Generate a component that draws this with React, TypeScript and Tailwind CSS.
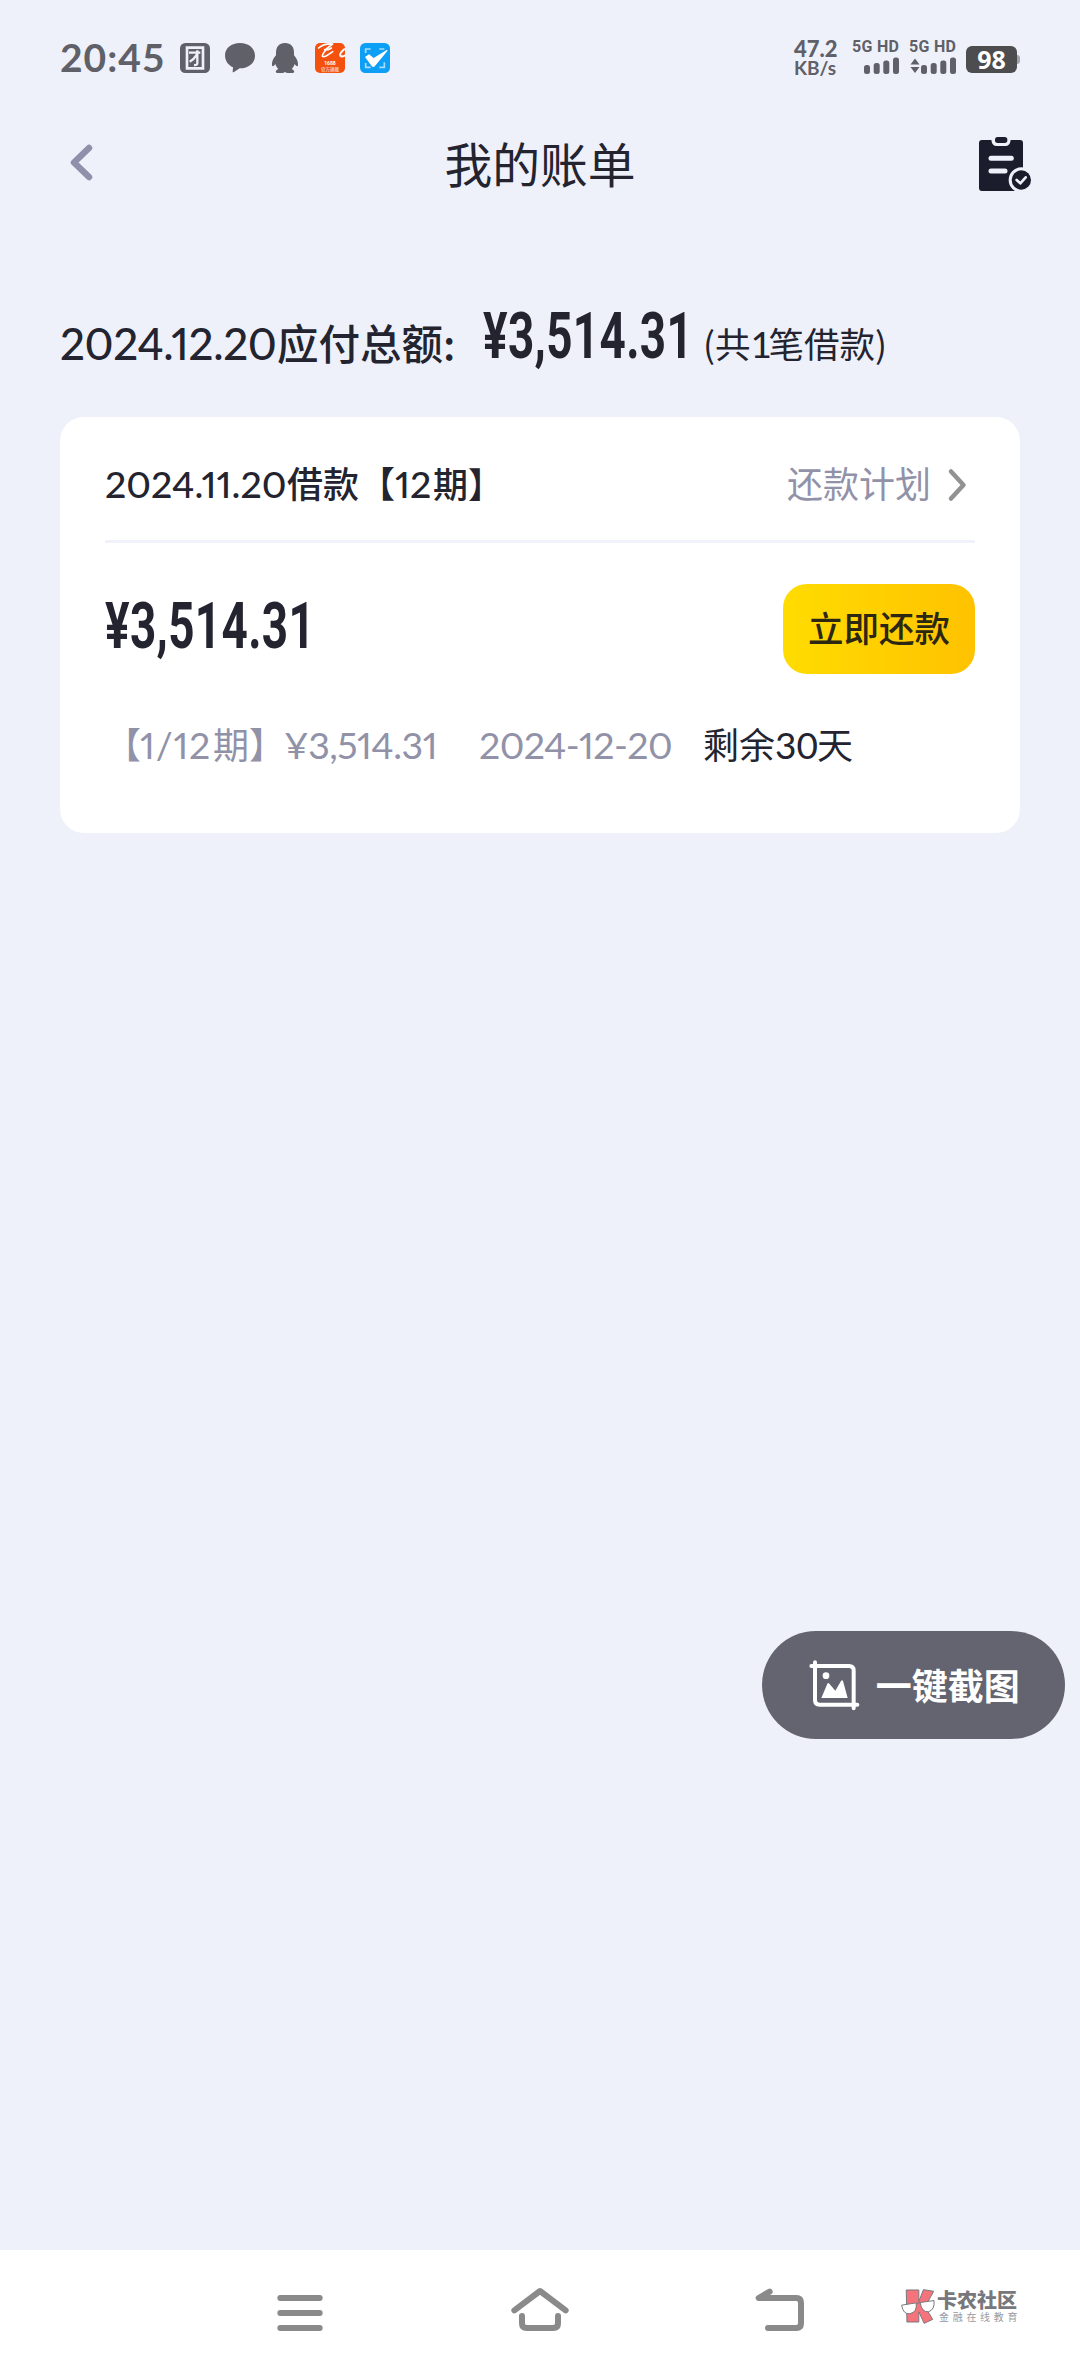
interface AmountProps {
  value: string;
}

// condensed amount figure
const Amount = ({ value }: AmountProps) => {
  return (
    <div className="h-[64px] w-[206px] whitespace-nowrap">
      <span className="inline-block origin-left scale-x-[0.705] font-['Roboto',sans-serif] text-[65px] font-bold leading-[64px] tracking-[0.5px] text-[#23242f]">
        {value}
      </span>
    </div>
  );
};

const Signal = ({ arrows = false }: { arrows?: boolean }) => {
  return (
    <div className="w-[47px]">
      <p className="h-[14px] whitespace-nowrap font-['Roboto',sans-serif] text-[16px] font-bold leading-[14px] tracking-[0.3px]">
        5G HD
      </p>
      <svg viewBox="0 0 47 18" className="mt-[3px] h-[18px] w-[47px]" fill="currentColor">
        {arrows && <path d="M6 1.5l4.5 6h-9zM6 16l-4.5-6h9z" />}
        <rect x="12" y="8" width="6" height="9" rx="2.5" />
        <rect x="21.7" y="6" width="6" height="11" rx="2.5" />
        <rect x="31.3" y="3.5" width="6" height="13.5" rx="2.5" />
        <rect x="41" y="0.5" width="6" height="16.5" rx="2.5" />
      </svg>
    </div>
  );
};

const StatusBar = () => {
  return (
    <div className="flex h-[110px] items-start px-[60px] text-[#5f6068]">
      <span className="mt-[33px] w-[120px] whitespace-nowrap font-['Lato',sans-serif] text-[39px] font-bold leading-[48px] tracking-[1px]">
        20:45
      </span>
      <div className="mt-[43px] flex gap-[15px]">
        <svg viewBox="0 0 90 90" className="size-[30px]">
          <rect width="90" height="90" rx="16" fill="#5f6068" />
          <path d="M17 10h56v70H17zM25 18v54h40V18z" fill="#eef1fa" fillRule="evenodd" />
          <path d="M27 29h34M52 22v39q0 6-10 5M51 34Q42 49 29 56" fill="none" stroke="#eef1fa" strokeWidth="7" />
        </svg>
        <svg viewBox="0 0 90 90" className="size-[30px]" fill="#5f6068">
          <path d="M45 0C19 0 0 16 0 37c0 17 10 30 24 36l-1 13c0 2 2 2 4 1l17-11c27 0 46-16 46-38S71 0 45 0z" />
        </svg>
        <svg viewBox="0 0 90 90" className="size-[30px]" fill="#5f6068">
          <path d="M45 0C27 0 18 12 18 29v8C9 47 5 57 6 67c1 5 5 3 10-4 2 7 5 11 9 15-9 4-10 11-3 12h17l6-3 6 3h17c7-1 6-8-3-12 4-4 7-8 9-15 5 7 9 9 10 4 1-10-3-20-12-30v-8C72 12 63 0 45 0z" />
        </svg>
        <div className="relative size-[30px] overflow-hidden rounded-[5px] bg-[#f4510f]">
          <svg viewBox="0 0 90 90" className="size-[30px]" fill="none" stroke="#fff" strokeLinecap="round">
            <path d="M11 15Q26 1 53 3M52 4Q35 14 25 31Q17 46 33 39Q44 33 53 26M29 20Q40 22 49 15" strokeWidth="5" />
            <path d="M88 19Q73 31 76 38Q80 43 89 38" strokeWidth="6" />
          </svg>
          <span className="absolute left-0 top-[17px] w-[30px] text-center font-['Roboto',sans-serif] text-[5px] font-bold leading-[6px] text-white">
            1688
          </span>
          <span className="absolute left-0 top-[24px] w-[30px] whitespace-nowrap text-center font-['Noto_Sans_CJK_SC',sans-serif] text-[4.500px] leading-[5px] text-white">
            官方旗舰
          </span>
        </div>
        <svg viewBox="0 0 90 90" className="size-[30px]" fill="none">
          <rect width="90" height="90" rx="16" fill="#0d9ff5" />
          <path d="M17 30V18h15M58 18h15M17 60v13h15M58 73h15V58" stroke="#a5dcfc" strokeWidth="5" />
          <path d="M15 42l12-8 14 11 39-24q4-1 2 3L45 69q-5 6-10 0z" fill="#fff" />
        </svg>
      </div>
      <div className="ml-auto mt-[40px] flex items-start">
        <div className="w-[58px] whitespace-nowrap font-['Lato',sans-serif]">
          <p className="text-[22px] font-black leading-[17px]">47.2</p>
          <p className="mt-[2px] text-[19px] font-bold leading-[17px]">KB/s</p>
        </div>
        <Signal />
        <div className="w-[10px]" />
        <Signal arrows />
        <div className="ml-[10px] mt-[6px] flex items-center">
          <span className="flex h-[27px] w-[51px] items-center justify-center rounded-[6px] bg-[#4d4d50] font-['Open_Sans',sans-serif] text-[25px] font-bold leading-[27px] text-white">
            98
          </span>
          <span className="h-[9px] w-[3px] rounded-r-sm bg-[#a3a4ab]" />
        </div>
      </div>
    </div>
  );
};

const Header = () => {
  return (
    <div className="flex h-[110px] items-start justify-between pr-[20px]">
      <svg viewBox="0 0 140 110" className="h-[110px] w-[140px]" fill="none">
        <path d="M89 38L74 52.5L89 67" stroke="#9090ab" strokeWidth="6.5" strokeLinecap="round" strokeLinejoin="round" />
      </svg>
      <h1 className="mt-[23px] text-[47.800px] leading-[60px] text-[#23242f]">我的账单</h1>
      <svg viewBox="0 -30 360 330" className="h-[110px] w-[120px]">
        <path d="M126 60h28q2 18 16 18h26q14 0 16-18h28q9 0 9 9v144H126q-9 0-9-9V69q0-9 9-9z" fill="#1b1c2c" />
        <rect x="165" y="51" width="37" height="18" rx="8" fill="#1b1c2c" />
        <path d="M153 115h61M153 153h42" stroke="#eef1fa" strokeWidth="15" strokeLinecap="round" />
        <circle cx="244" cy="180" r="38" fill="#eef1fa" />
        <circle cx="244" cy="180" r="29" fill="#1b1c2c" />
        <path d="M230 180l11 10 16-18" fill="none" stroke="#eef1fa" strokeWidth="8" strokeLinecap="round" strokeLinejoin="round" />
      </svg>
    </div>
  );
};

const BillCard = () => {
  return (
    <div className="mx-[60px] h-[416px] rounded-[24px] bg-white px-[45px]">
      <div className="flex h-[126px] items-start justify-between border-b-[3px] border-[#f0f1f9]">
        <div className="mt-[40px] flex items-baseline whitespace-nowrap leading-[50px] text-[#23242f]">
          <span className="w-[182px] font-['Lato',sans-serif] text-[37.500px] font-medium proportional-nums">2024.11.20</span>
          <span className="w-[108px] text-[36px] font-medium">借款【</span>
          <span className="w-[38px] font-['Lato',sans-serif] text-[37.500px] font-medium proportional-nums">12</span>
          <span className="text-[35px] font-medium">期】</span>
        </div>
        <div className="mt-[40px] flex items-center text-[36px] leading-[50px] text-[#9192a8]">
          <span>还款计划</span>
          <svg viewBox="0 0 44 50" className="h-[50px] w-[44px]" fill="none">
            <path d="M20 14.5L32.5 28L20 41.5" stroke="#929292" strokeWidth="4.5" strokeLinecap="round" strokeLinejoin="round" />
          </svg>
        </div>
      </div>
      <div className="flex items-start justify-between pt-[41px]">
        <div className="mt-[10px]">
          <Amount value="¥3,514.31" />
        </div>
        <button className="h-[90px] w-[192px] rounded-[24px] bg-linear-to-r from-[#ffdc00] to-[#ffc200] pb-[4px] text-[35.500px] font-medium leading-[86px] text-[#2b2713]">
          立即还款
        </button>
      </div>
      <div className="mt-[44px] flex items-baseline whitespace-nowrap text-[36px] leading-[50px] text-[#9192a8]">
        <span className="w-[35px]">【</span>
        <span className="w-[73px] font-['Lato',sans-serif] text-[37.500px] proportional-nums tracking-[0.800px]">1/12</span>
        <span className="w-[71px]">期】</span>
        <span className="w-[195px] font-['Lato',sans-serif] text-[37.500px] proportional-nums tracking-[-0.500px]">¥3,514.31</span>
        <span className="w-[224px] font-['Lato',sans-serif] text-[37.500px] proportional-nums tracking-[-0.600px]">2024-12-20</span>
        <span className="flex items-baseline text-[#23242f]">
          剩余<span className="w-[42px] font-['Lato',sans-serif] text-[37px]">30</span>天
        </span>
      </div>
    </div>
  );
};

const ShotButton = () => {
  return (
    <button className="absolute left-[762px] top-[1631px] flex h-[108px] w-[303px] items-center rounded-full bg-[#636470] text-white">
      <svg viewBox="200 140 164 168" className="ml-[45px] h-[56px] w-[54.700px]" fill="none">
        <path d="M224 156v113q0 14 14 14h113M213 167h113q14 0 14 14v113" stroke="#fff" strokeWidth="12" strokeLinecap="round" />
        <circle cx="257" cy="196" r="10" fill="#fff" />
        <path d="M243 263l18-43q3-4 6 0l18 21 17-29q3-4 6 0l14 51z" fill="#fff" />
      </svg>
      <span className="ml-[14px] whitespace-nowrap pb-[2px] text-[36px] font-bold leading-[50px]">一键截图</span>
    </button>
  );
};

const NavBar = () => {
  return (
    <div className="flex h-[126px] items-start bg-white text-[#8a8a8a]">
      <svg viewBox="0 30 1050 378" className="ml-[250px] h-[126px] w-[350px]" fill="none" stroke="currentColor" strokeWidth="18" strokeLinecap="round" strokeLinejoin="round">
        <path d="M91 174h118M91 219h118M91 264h118" />
        <path d="M793 211l77-58 77 58M816 228v22q0 14 14 14h80q14 0 14-14v-22" />
      </svg>
      <svg viewBox="0 30 450 378" className="ml-[130px] h-[126px] w-[150px]" fill="none" stroke="currentColor" strokeWidth="18" strokeLinecap="round" strokeLinejoin="round">
        <path d="M119 155l-33 19h113q14 0 14 14v62q0 14-14 14h-85" />
      </svg>
      <div className="mt-[37px] flex">
        <svg viewBox="505 140 110 115" className="ml-[19px] h-[38px] w-[37px]" stroke="#77777c" strokeWidth="3">
          <path d="M526 149h38v35l14-36 31 5-26 47 23 38-26 12-16-35v31h-36z" fill="#f5747c" />
          <path d="M512 195l44-7q4 28-19 33-20 3-25-26zM568 187l42-6q3 28-17 34-20 2-25-28zM556 190l12-3" fill="#fff" />
        </svg>
        <div className="ml-[1px] whitespace-nowrap">
          <p className="text-[20px] font-black leading-[25px] text-[#77777c]">卡农社区</p>
          <p className="ml-[2px] text-[10px] leading-[10px] tracking-[3.700px] text-[#9a9a9e]">金融在线教育</p>
        </div>
      </div>
    </div>
  );
};

export default function App() {
  return (
    <div className="relative flex h-[2376px] w-[1080px] flex-col overflow-hidden bg-[#eef1fa] font-['Noto_Sans_CJK_SC',sans-serif]">
      <StatusBar />
      <Header />
      <div className="flex h-[197px] items-start whitespace-nowrap pl-[60px] pt-[82px] text-[#23242f]">
        <div className="mt-[10px] flex w-[423px] items-baseline leading-[60px]">
          <span className="w-[217px] font-['Lato',sans-serif] text-[44px] font-medium proportional-nums tracking-[-0.400px]">2024.12.20</span>
          <span className="text-[41.500px] font-medium">应付总额:</span>
        </div>
        <div className="mt-[2px]">
          <Amount value="¥3,514.31" />
        </div>
        <div className="ml-[14px] mt-[16px] flex items-baseline text-[35.500px] leading-[50px]">
          (共<span className="w-[18px] font-['Lato',sans-serif] text-[37px] tracking-[-3px]">1</span>笔借款)
        </div>
      </div>
      <BillCard />
      <ShotButton />
      <div className="mt-auto">
        <NavBar />
      </div>
    </div>
  );
}
